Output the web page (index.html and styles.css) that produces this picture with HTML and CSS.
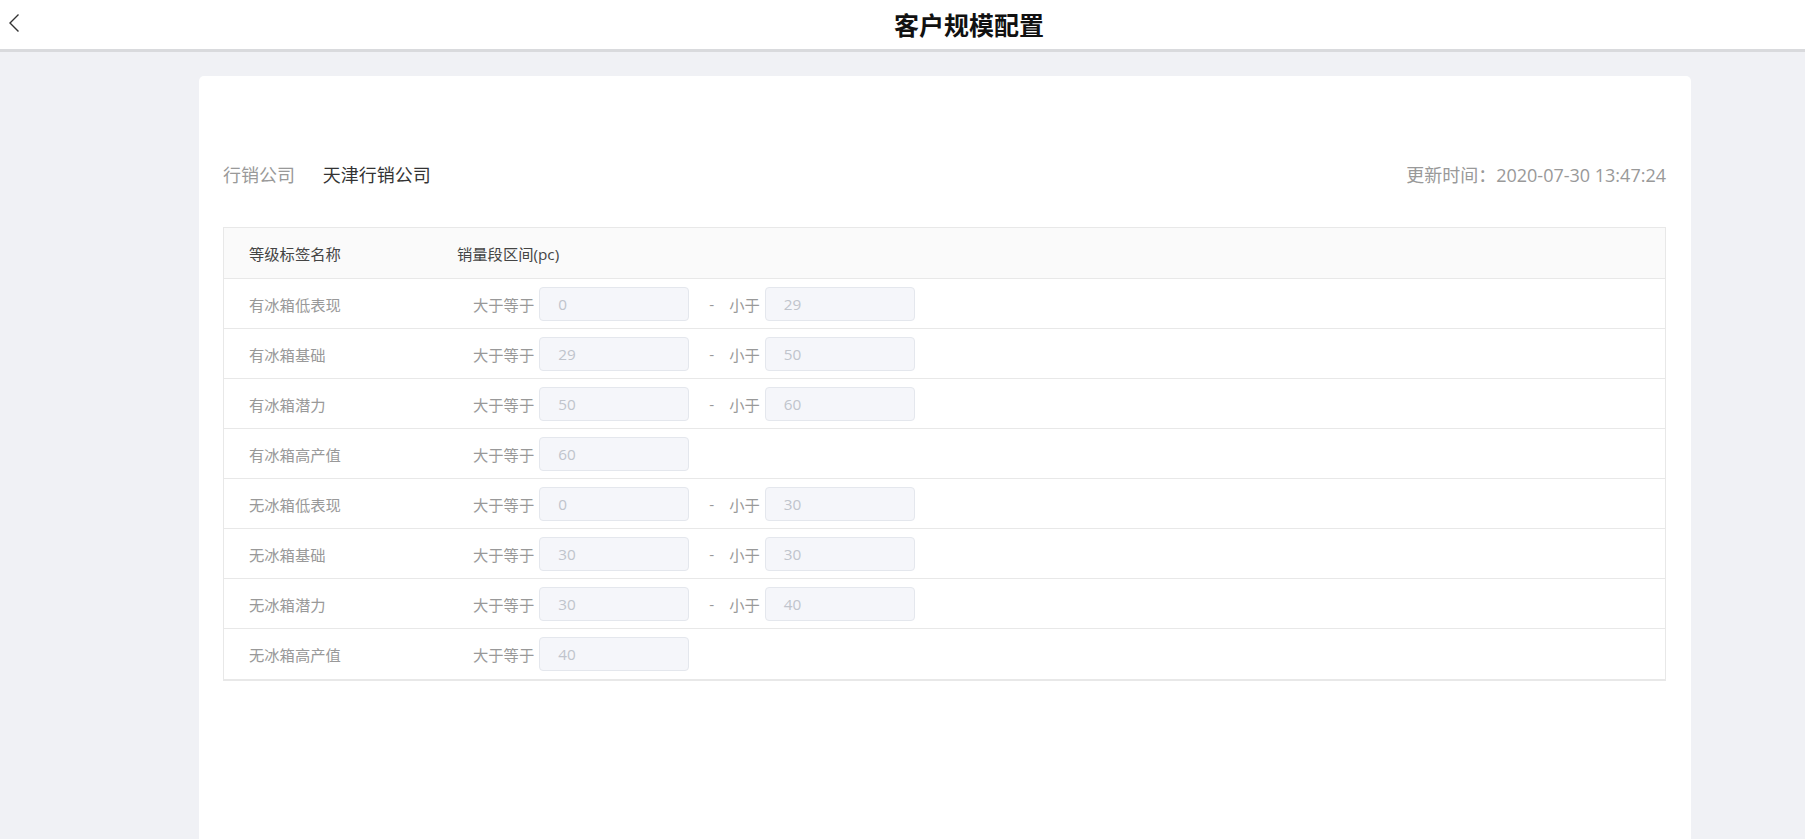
FILE: index.html
```html
<!DOCTYPE html>
<html lang="zh">
<head>
<meta charset="utf-8">
<title>客户规模配置</title>
<link rel="stylesheet" href="styles.css">
</head>
<body>
<header class="topbar">
  <span class="back">
    <svg width="12" height="20" viewBox="0 0 12 20"><path d="M10.5 1.5 L2 10 L10.5 18.5" fill="none" stroke="#333" stroke-width="1.4"/></svg>
  </span>
  <h1 class="title">客户规模配置</h1>
</header>
<main class="main">
  <section class="card">
    <div class="company">
      <div class="company-left">
        <span class="company-label">行销公司</span>
        <span class="company-name">天津行销公司</span>
      </div>
      <div class="update">更新时间：2020-07-30 13:47:24</div>
    </div>
    <div class="table">
      <div class="row head">
        <div class="c1">等级标签名称</div>
        <div class="c2">销量段区间(pc)</div>
      </div>
      <div class="row">
        <div class="c1 name">有冰箱低表现</div>
        <div class="c2 range"><span class="lbl">大于等于</span><span class="inp">0</span><span class="dash">-</span><span class="lbl">小于</span><span class="inp">29</span></div>
      </div>
      <div class="row">
        <div class="c1 name">有冰箱基础</div>
        <div class="c2 range"><span class="lbl">大于等于</span><span class="inp">29</span><span class="dash">-</span><span class="lbl">小于</span><span class="inp">50</span></div>
      </div>
      <div class="row">
        <div class="c1 name">有冰箱潜力</div>
        <div class="c2 range"><span class="lbl">大于等于</span><span class="inp">50</span><span class="dash">-</span><span class="lbl">小于</span><span class="inp">60</span></div>
      </div>
      <div class="row">
        <div class="c1 name">有冰箱高产值</div>
        <div class="c2 range"><span class="lbl">大于等于</span><span class="inp">60</span></div>
      </div>
      <div class="row">
        <div class="c1 name">无冰箱低表现</div>
        <div class="c2 range"><span class="lbl">大于等于</span><span class="inp">0</span><span class="dash">-</span><span class="lbl">小于</span><span class="inp">30</span></div>
      </div>
      <div class="row">
        <div class="c1 name">无冰箱基础</div>
        <div class="c2 range"><span class="lbl">大于等于</span><span class="inp">30</span><span class="dash">-</span><span class="lbl">小于</span><span class="inp">30</span></div>
      </div>
      <div class="row">
        <div class="c1 name">无冰箱潜力</div>
        <div class="c2 range"><span class="lbl">大于等于</span><span class="inp">30</span><span class="dash">-</span><span class="lbl">小于</span><span class="inp">40</span></div>
      </div>
      <div class="row last">
        <div class="c1 name">无冰箱高产值</div>
        <div class="c2 range"><span class="lbl">大于等于</span><span class="inp">40</span></div>
      </div>
    </div>
  </section>
</main>
</body>
</html>
```
FILE: styles.css
```css
* { box-sizing: border-box; }
html, body { margin: 0; padding: 0; height: 100%; overflow: hidden; }
body {
  background: #f0f1f5;
  font-family: "Open Sans", "Noto Sans CJK SC", sans-serif;
  color: #333;
}
.topbar {
  height: 52px;
  background: #fff;
  border-bottom: 3px solid #d9dadd;
  display: flex;
  align-items: center;
  justify-content: center;
  position: relative;
}
.back {
  position: absolute;
  left: 8px;
  top: 13px;
  display: flex;
}
.title {
  margin: 0;
  font-family: "Noto Sans CJK SC", sans-serif;
  font-size: 25px;
  font-weight: 700;
  color: #111;
  line-height: 49px;
  padding-left: 133px;
}
.main {
  padding: 24px 114px 0 199px;
}
.card {
  background: #fff;
  border-radius: 5px;
  height: 800px;
  padding: 86px 25px 0 24px;
}
.company {
  display: flex;
  justify-content: space-between;
  align-items: center;
  height: 24px;
  font-size: 18px;
}
.company-label { color: #999; margin-right: 23px; }
.company-name { color: #333; }
.update { color: #999; }
.table {
  margin-top: 41px;
  border: 1px solid #e8e8e8;
  border-bottom-width: 2px;
}
.row {
  display: flex;
  align-items: center;
  height: 50px;
  border-bottom: 1px solid #e8e8e8;
  font-size: 15.3px;
}
.row.last { border-bottom: none; }
.row.head { background: #fafafa; color: #444; height: 51px; }
.c1 { width: 233px; padding-left: 25px; flex: none; }
.name { color: #999; }
.c2 { display: flex; align-items: center; }
.range { padding-left: 16px; color: #999; }
.lbl { margin-right: 5px; }
.inp {
  width: 150px;
  height: 34px;
  background: #f5f6fa;
  border: 1px solid #e4e7ed;
  border-radius: 4px;
  color: #c0c4cc;
  padding-left: 18px;
  display: flex;
  align-items: center;
}
.dash { margin: 0 15px 0 20px; }
```
